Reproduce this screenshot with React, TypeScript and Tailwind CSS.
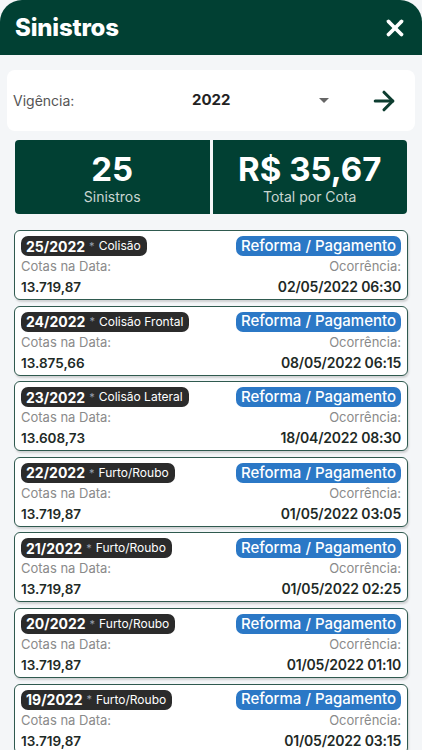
import { X, ArrowRight } from 'lucide-react';

type Sinistro = Readonly<{
  numero: string;
  tipo: string;
  cotas: string;
  ocorrencia: string;
}>;

const sinistros: Sinistro[] = [
  { numero: '25/2022', tipo: 'Colisão', cotas: '13.719,87', ocorrencia: '02/05/2022 06:30' },
  { numero: '24/2022', tipo: 'Colisão Frontal', cotas: '13.875,66', ocorrencia: '08/05/2022 06:15' },
  { numero: '23/2022', tipo: 'Colisão Lateral', cotas: '13.608,73', ocorrencia: '18/04/2022 08:30' },
  { numero: '22/2022', tipo: 'Furto/Roubo', cotas: '13.719,87', ocorrencia: '01/05/2022 03:05' },
  { numero: '21/2022', tipo: 'Furto/Roubo', cotas: '13.719,87', ocorrencia: '01/05/2022 02:25' },
  { numero: '20/2022', tipo: 'Furto/Roubo', cotas: '13.719,87', ocorrencia: '01/05/2022 01:10' },
  { numero: '19/2022', tipo: 'Furto/Roubo', cotas: '13.719,87', ocorrencia: '01/05/2022 03:15' },
];

function SinistroCard({ item }: { item: Sinistro }) {
  return (
    <div className="h-[70px] rounded-md border-[1.5px] border-[#2f5a4f] bg-white px-[6px] pt-[5px] shadow-[1px_2px_2px_rgba(0,0,0,0.15)]">
      <div className="flex items-center justify-between">
        <span className="flex h-[20px] items-center rounded-[7px] bg-[#2b2b2b] pl-[5px] pr-[6px] text-white">
          <span className="text-[14px] font-bold">{item.numero}</span>
          <span className="mx-[4px] text-[11px] text-gray-400">*</span>
          <span className="text-[12px]">{item.tipo}</span>
        </span>
        <span className="flex h-[20px] items-center rounded-[7px] bg-[#2b78c6] px-[5px] text-[15px] font-medium text-white">
          Reforma / Pagamento
        </span>
      </div>
      <div className="mt-[1px] flex justify-between text-[13px] leading-[18px] text-[#8a8a8a]">
        <span>Cotas na Data:</span>
        <span>Ocorrência:</span>
      </div>
      <div className="mt-[1px] flex items-baseline justify-between leading-[22px] font-semibold text-[#1e2a26]">
        <span className="text-[13.5px]">{item.cotas}</span>
        <span className="text-[14px] tracking-[-0.2px]">{item.ocorrencia}</span>
      </div>
    </div>
  );
}

export default function App() {
  return (
    <div className="h-[750px] overflow-hidden bg-[#f4f6f8] font-['Inter','Liberation_Sans',sans-serif]">
      <header className="flex h-[55px] items-center justify-between rounded-t-[22px] bg-[#014033] pl-[15px] pr-[14px]">
        <h1 className="text-[24px] font-extrabold tracking-[-0.2px] text-white">Sinistros</h1>
        <X className="h-[26px] w-[26px] text-white" strokeWidth={3.5} />
      </header>

      <div className="px-[7px] pt-[15px]">
        <div className="flex h-[61px] items-center rounded-lg bg-white pl-[6px] pr-[16px]">
          <span className="w-[179px] text-[14px] text-[#555]">Vigência:</span>
          <span className="text-[15px] font-bold text-[#222]">2022</span>
          <span className="ml-auto mr-[40px] h-0 w-0 border-x-[5px] border-t-[5px] border-x-transparent border-t-[#666]" />
          <ArrowRight className="h-[30px] w-[30px] text-[#0d3d30]" strokeWidth={2.5} />
        </div>
      </div>

      <div className="mx-[15px] mt-[9px] grid h-[74px] grid-cols-2 gap-[3px]">
        <div className="flex flex-col items-center justify-center rounded-l-sm bg-[#014033] text-white">
          <span className="text-[33px] leading-[38px] font-bold">25</span>
          <span className="text-[14px] leading-[17px] text-[#c9d6d1]">Sinistros</span>
        </div>
        <div className="flex flex-col items-center justify-center rounded-r-sm bg-[#014033] text-white">
          <span className="text-[33px] leading-[38px] font-bold">R$ 35,67</span>
          <span className="text-[14px] leading-[17px] text-[#c9d6d1]">Total por Cota</span>
        </div>
      </div>

      <div className="mt-[16px] flex flex-col gap-[5.6px] px-[14px]">
        {sinistros.map((s) => (
          <SinistroCard key={s.numero} item={s} />
        ))}
      </div>
    </div>
  );
}
